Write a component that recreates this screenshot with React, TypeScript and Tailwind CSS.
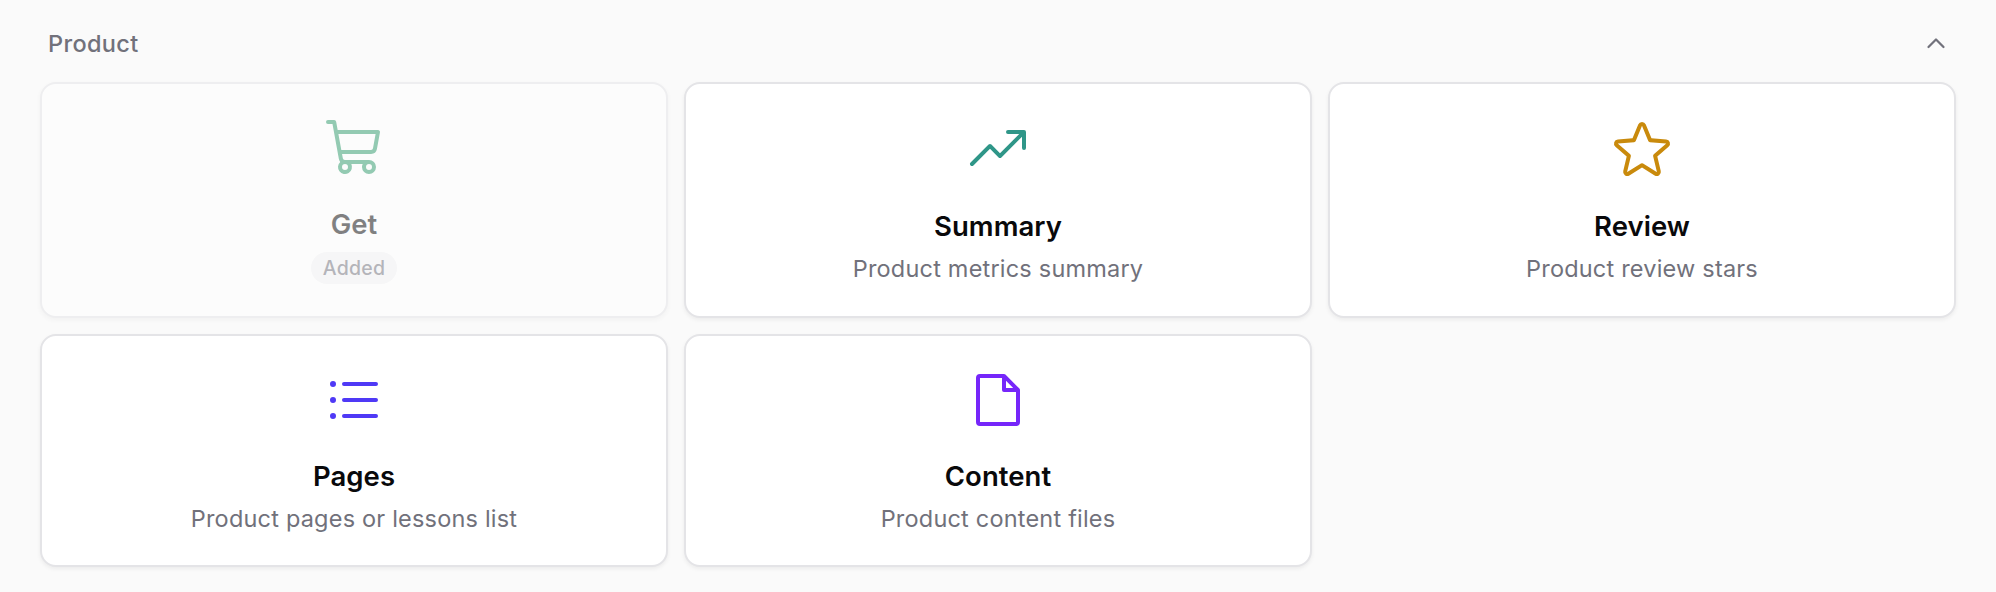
import type { IconType } from 'react-icons';
import {
  PiCaretUpBold,
  PiFile,
  PiListBullets,
  PiShoppingCart,
  PiStar,
  PiTrendUp,
} from 'react-icons/pi';

interface Block {
  id: string;
  title: string;
  description: string;
  icon: IconType;
  color: string;
  added?: boolean;
}

const BLOCKS: Block[] = [
  { id: 'get', title: 'Get', description: '', icon: PiShoppingCart, color: 'text-[#2e9b6c]', added: true },
  { id: 'summary', title: 'Summary', description: 'Product metrics summary', icon: PiTrendUp, color: 'text-[#2f9688]' },
  { id: 'review', title: 'Review', description: 'Product review stars', icon: PiStar, color: 'text-[#c98a0c]' },
  { id: 'pages', title: 'Pages', description: 'Product pages or lessons list', icon: PiListBullets, color: 'text-[#4f39f6]' },
  { id: 'content', title: 'Content', description: 'Product content files', icon: PiFile, color: 'text-[#7626fa]' },
];

function BlockCard({ block }: { block: Block }) {
  const Icon = block.icon;

  return (
    <button
      disabled={block.added}
      className={`flex flex-col items-center justify-center rounded-2xl border-2 border-[#e4e4e7] bg-white shadow-[0_2px_4px_rgba(0,0,0,0.06)] ${
        block.added ? 'opacity-50' : 'pt-1'
      }`}
    >
      <Icon className={`size-16 ${block.color}`} />
      <span className="mt-6 text-[27.5px] leading-10 font-semibold tracking-[0.05px] text-[#09090b]">
        {block.title}
      </span>
      {block.added ? (
        <span className="mt-2 rounded-full bg-[#f4f4f5] px-3 text-[19.5px] leading-8 font-medium tracking-[0.25px] text-[#71717b]">
          Added
        </span>
      ) : (
        <span className="mt-[5px] text-[23.5px] leading-9 tracking-[0.2px] text-[#71717b]">{block.description}</span>
      )}
    </button>
  );
}

export default function App() {
  return (
    <div className="h-[592px] bg-[#fafafa] px-10 pt-5 font-[Inter,sans-serif]">
      {/* Section header */}
      <div className="flex h-12 items-center justify-between px-2 text-[#71717b]">
        <h3 className="text-[23.5px] font-medium tracking-[0.35px]">Product</h3>
        <PiCaretUpBold className="size-6" />
      </div>

      {/* Block cards */}
      <div className="mt-3.5 grid grid-cols-3 grid-rows-[236px_233px] gap-4">
        {BLOCKS.map(block => (
          <BlockCard key={block.id} block={block} />
        ))}
      </div>
    </div>
  );
}
